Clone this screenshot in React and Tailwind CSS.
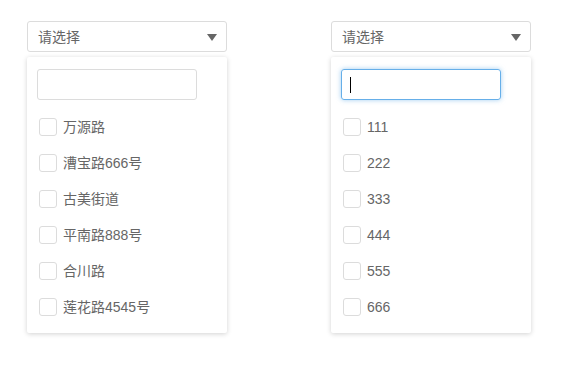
const leftOptions = ['万源路', '漕宝路666号', '古美街道', '平南路888号', '合川路', '莲花路4545号'];
const rightOptions = ['111', '222', '333', '444', '555', '666'];

const Caret = () => (
  <svg width="10" height="7" viewBox="0 0 10 7" className="block">
    <path d="M0 0 L10 0 L5 7 Z" fill="#666666" />
  </svg>
);

const MultiSelect = ({ options, focused }) => {
  return (
    <div className="w-[200px]">
      {/* Trigger */}
      <div className="h-[31px] border border-[#dcdcdc] rounded-[3px] bg-white flex items-center justify-between pl-[10px] pr-[9px] pt-[2px]">
        <span className="text-[14px] text-[#666]">请选择</span>
        <Caret />
      </div>

      {/* Dropdown panel */}
      <div className="mt-[5px] bg-white rounded-[2px] shadow-[0_1px_5px_rgba(0,0,0,0.18)] pt-[12px] pb-[8px]">
        <div className="pl-[10px]">
          {focused ? (
            <div className="w-[160px] h-[31px] border border-[#66afe9] rounded-[3px] shadow-[0_0_5px_rgba(102,175,233,0.6)] flex items-center pl-[8px]">
              <span className="block w-px h-[16px] bg-black" />
            </div>
          ) : (
            <div className="w-[160px] h-[31px] border border-[#dcdcdc] rounded-[3px]" />
          )}
        </div>
        <div className="mt-[9px]">
          {options.map((opt) => (
            <div key={opt} className="h-[36px] flex items-center pl-[12px]">
              <span className="w-[18px] h-[18px] border border-[#dcdcdc] rounded-[3px] bg-white shrink-0" />
              <span className="ml-[6px] text-[14px] text-[#666]">{opt}</span>
            </div>
          ))}
        </div>
      </div>
    </div>
  );
};

export default function App() {
  return (
    <div
      className="w-[564px] h-[366px] bg-white pt-[21px] pl-[27px] flex gap-[104px]"
      style={{ fontFamily: '"Liberation Sans", "Noto Sans CJK SC", sans-serif' }}
    >
      <MultiSelect options={leftOptions} />
      <MultiSelect options={rightOptions} focused />
    </div>
  );
}
